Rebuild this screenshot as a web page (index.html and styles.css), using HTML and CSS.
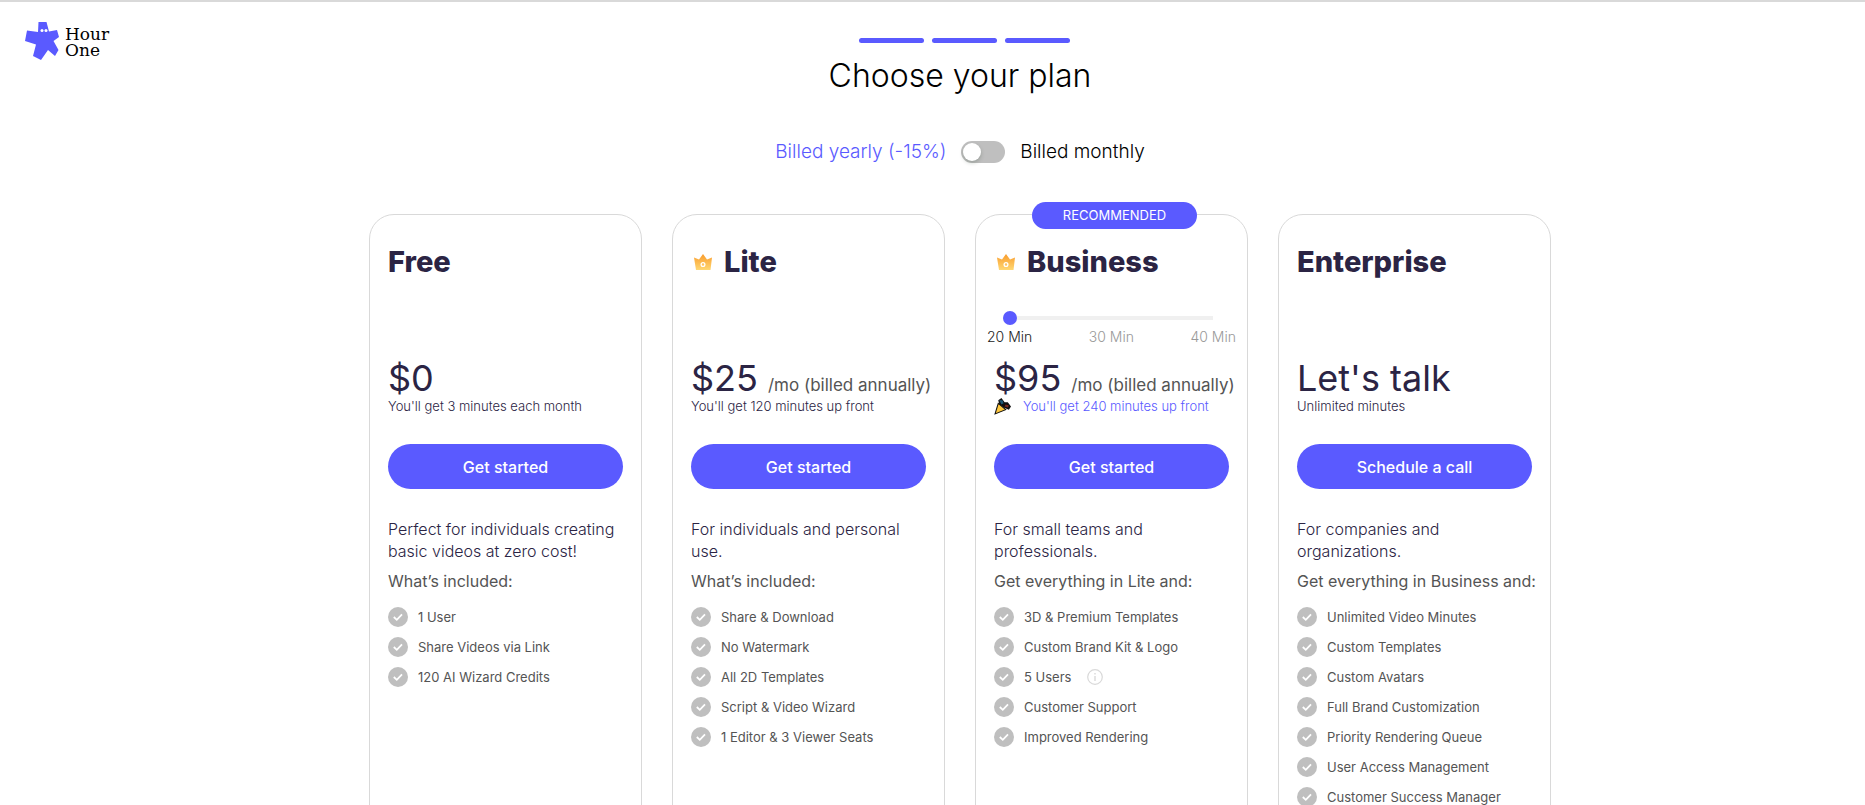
FILE: index.html
```html
<!DOCTYPE html>
<html lang="en">
<head>
    <meta charset="UTF-8">
    <meta name="viewport" content="width=device-width, initial-scale=1.0">
    <title>Choose your plan</title>
    <link rel="stylesheet" href="styles.css">
</head>
<body>
    <!-- Shared icons -->
    <svg class="sprite" aria-hidden="true">
        <defs>
            <linearGradient id="crown-fill" x1="0" y1="0" x2="0" y2="1">
                <stop offset="0" stop-color="#f99b2c"/>
                <stop offset="1" stop-color="#ffd873"/>
            </linearGradient>
        </defs>
        <symbol id="check" viewBox="0 0 20 20">
            <circle cx="10" cy="10" r="10" fill="#bfbfbf"/>
            <path d="M5.800 10 L8.800 12.800 L14 7.300" fill="none" stroke="#fff" stroke-width="1.8"/>
        </symbol>
        <symbol id="crown" viewBox="0 0 18 16">
            <path d="M0 3.5 L5 5.5 L9 0 L13 5.5 L18 3.5 L16.5 16 H2 Z" fill="url(#crown-fill)"/>
            <circle cx="9" cy="10.5" r="1.9" fill="#ffc35c" stroke="#fff" stroke-width="1.3"/>
        </symbol>
    </svg>

    <header class="header">
        <a class="logo" href="#">
            <svg class="logo-mark" viewBox="0 0 34 38" aria-hidden="true">
                <path d="M13.500 0 H21.500 L24 9.500 L32 8 L34 15 L28.500 19 L33.500 28 L30 34 L23 28 L16 38 L8 34 L11 22.500 L0 19 L2 8.500 L13 10 Z" fill="#5a5aff"/>
                <circle cx="17" cy="8.500" r="1.500" fill="#fff"/>
                <circle cx="21" cy="8.500" r="1.500" fill="#fff"/>
            </svg>
            <span class="logo-text">Hour<br>One</span>
        </a>
    </header>

    <main class="page">
        <div class="steps">
            <span class="step"></span>
            <span class="step"></span>
            <span class="step"></span>
        </div>
        <h1>Choose your plan</h1>

        <div class="billing">
            <span class="billing-yearly">Billed yearly (-15%)</span>
            <input type="checkbox" class="switch" id="billing-switch">
            <label for="billing-switch">Billed monthly</label>
        </div>

        <div class="plans">
            <section class="plan">
                <h2>Free</h2>
                <div class="minutes"></div>
                <div class="price">$0</div>
                <p class="price-note">You'll get 3 minutes each month</p>
                <button type="button">Get started</button>
                <p class="description">Perfect for individuals creating basic videos at zero cost!</p>
                <h3>What’s included:</h3>
                <ul>
                    <li><svg class="check"><use href="#check"/></svg>1 User</li>
                    <li><svg class="check"><use href="#check"/></svg>Share Videos via Link</li>
                    <li><svg class="check"><use href="#check"/></svg>120 AI Wizard Credits</li>
                </ul>
            </section>

            <section class="plan">
                <h2><svg class="crown"><use href="#crown"/></svg>Lite</h2>
                <div class="minutes"></div>
                <div class="price">$25 <span class="period">/mo (billed annually)</span></div>
                <p class="price-note">You'll get 120 minutes up front</p>
                <button type="button">Get started</button>
                <p class="description">For individuals and personal use.</p>
                <h3>What’s included:</h3>
                <ul>
                    <li><svg class="check"><use href="#check"/></svg>Share &amp; Download</li>
                    <li><svg class="check"><use href="#check"/></svg>No Watermark</li>
                    <li><svg class="check"><use href="#check"/></svg>All 2D Templates</li>
                    <li><svg class="check"><use href="#check"/></svg>Script &amp; Video Wizard</li>
                    <li><svg class="check"><use href="#check"/></svg>1 Editor &amp; 3 Viewer Seats</li>
                </ul>
            </section>

            <section class="plan">
                <div class="badge">RECOMMENDED</div>
                <h2><svg class="crown"><use href="#crown"/></svg>Business</h2>
                <div class="minutes">
                    <input type="range" class="slider" min="20" max="40" step="10" value="20" aria-label="Minutes per month">
                    <div class="slider-labels">
                        <span class="selected">20 Min</span>
                        <span>30 Min</span>
                        <span>40 Min</span>
                    </div>
                </div>
                <div class="price">$95 <span class="period">/mo (billed annually)</span></div>
                <p class="price-note highlight">
                    <svg class="party" viewBox="0 0 16 16" aria-hidden="true">
                        <path d="M4 2 L7 0 L10 4 L13 4 L16 8 L14 11 L9 9 L5 6 Z" fill="#111"/>
                        <path d="M5 2 L8 2 L9 5 L7 6 Z" fill="#1d5a78"/>
                        <path d="M11 6 L14 7 L13 9 L10 8 Z" fill="#7a2b20"/>
                        <path d="M4 5 L11 11 L1 15 Z" fill="#ffc83d" stroke="#111"/>
                    </svg>
                    You'll get 240 minutes up front
                </p>
                <button type="button">Get started</button>
                <p class="description">For small teams and professionals.</p>
                <h3>Get everything in Lite and:</h3>
                <ul>
                    <li><svg class="check"><use href="#check"/></svg>3D &amp; Premium Templates</li>
                    <li><svg class="check"><use href="#check"/></svg>Custom Brand Kit &amp; Logo</li>
                    <li>
                        <svg class="check"><use href="#check"/></svg>5 Users
                        <svg class="info" viewBox="0 0 16 16" aria-hidden="true">
                            <circle cx="8" cy="8" r="7.3" fill="none" stroke="#d9d9d9" stroke-width="1.2"/>
                            <path d="M8 7 V12 M8 4 V5.500" stroke="#d9d9d9" stroke-width="1.4"/>
                        </svg>
                    </li>
                    <li><svg class="check"><use href="#check"/></svg>Customer Support</li>
                    <li><svg class="check"><use href="#check"/></svg>Improved Rendering</li>
                </ul>
            </section>

            <section class="plan">
                <h2>Enterprise</h2>
                <div class="minutes"></div>
                <div class="price">Let's talk</div>
                <p class="price-note">Unlimited minutes</p>
                <button type="button">Schedule a call</button>
                <p class="description">For companies and organizations.</p>
                <h3>Get everything in Business and:</h3>
                <ul>
                    <li><svg class="check"><use href="#check"/></svg>Unlimited Video Minutes</li>
                    <li><svg class="check"><use href="#check"/></svg>Custom Templates</li>
                    <li><svg class="check"><use href="#check"/></svg>Custom Avatars</li>
                    <li><svg class="check"><use href="#check"/></svg>Full Brand Customization</li>
                    <li><svg class="check"><use href="#check"/></svg>Priority Rendering Queue</li>
                    <li><svg class="check"><use href="#check"/></svg>User Access Management</li>
                    <li><svg class="check"><use href="#check"/></svg>Customer Success Manager</li>
                </ul>
            </section>
        </div>
    </main>
</body>
</html>
```
FILE: styles.css
```css
* {
    box-sizing: border-box;
}

body {
    font-family: Inter, 'Open Sans', sans-serif;
    background-color: #fff;
    color: #000;
    margin: 0;
    border-top: 2px solid #d9d9d9;
    display: flex;
    align-items: flex-start;
}

h1, h2, h3, p, ul {
    margin: 0;
    padding: 0;
}

.sprite {
    position: absolute;
    width: 0;
    height: 0;
}

/* Side column with the logo */
.header {
    flex: none;
    width: 55px;
    padding: 20px 0 0 25px;
}

.logo {
    display: flex;
    gap: 6px;
    width: 86px;
    color: #000;
    text-decoration: none;
}

.logo-mark {
    flex: none;
    width: 34px;
    height: 38px;
}

.logo-text {
    padding-top: 4px;
    font-family: 'DejaVu Serif', serif;
    font-size: 17px;
    line-height: 16px;
}

.page {
    flex: 1;
    display: flex;
    flex-direction: column;
    align-items: center;
    padding: 36px 0 40px;
}

.steps {
    display: flex;
}

.step {
    width: 65px;
    height: 5px;
    margin-left: 8px;
    border-radius: 3px;
    background-color: #5a5aff;
}

h1 {
    margin-top: 10px;
    font-size: 32px;
    font-weight: 300;
    line-height: 46px;
}

.billing {
    display: flex;
    align-items: center;
    gap: 15px;
    margin-top: 39px;
    font-size: 19px;
    font-weight: 300;
    line-height: 28px;
}

.billing-yearly {
    color: #5a5aff;
}

.switch {
    -webkit-appearance: none;
    appearance: none;
    width: 44px;
    height: 22px;
    margin: 0;
    padding: 2px;
    border-radius: 11px;
    background-color: #bfbfbf;
    cursor: pointer;
}

.switch::before {
    content: "";
    display: block;
    width: 18px;
    height: 18px;
    border-radius: 50%;
    background-color: #fff;
    box-shadow: 0 2px 4px rgba(0, 35, 11, 0.2);
}

.switch:checked::before {
    margin-left: 22px;
}

/* Plan cards */
.plans {
    display: grid;
    grid-template-columns: repeat(4, 273px);
    gap: 30px;
    margin-top: 48px;
}

.plan {
    position: relative;
    min-height: 640px;
    padding: 26px 18px;
    border: 1px solid #d9d9d9;
    border-radius: 25px;
    color: #545454;
}

.badge {
    position: absolute;
    top: -13px;
    left: 56px;
    width: 165px;
    border-radius: 14px;
    background-color: #5a5aff;
    color: #fff;
    font-size: 13px;
    line-height: 27px;
    text-align: center;
}

h2 {
    display: flex;
    align-items: center;
    gap: 12px;
    color: #2b2444;
    font-size: 29px;
    font-weight: 800;
    line-height: 42px;
}

.crown {
    width: 18px;
    height: 16px;
    margin-left: 3px;
}

.minutes {
    height: 75px;
    padding-top: 28px;
}

.slider {
    -webkit-appearance: none;
    appearance: none;
    display: block;
    width: 210px;
    height: 14px;
    margin: 0 0 0 9px;
    background: linear-gradient(#f0f0f0, #f0f0f0) center / 100% 4px no-repeat;
    cursor: pointer;
}

.slider::-webkit-slider-thumb {
    -webkit-appearance: none;
    width: 14px;
    height: 14px;
    border-radius: 50%;
    background-color: #5a5aff;
}

.slider-labels {
    display: flex;
    justify-content: space-between;
    margin: 0 -7px;
    color: #999;
    font-size: 14px;
    font-weight: 300;
    line-height: 24px;
}

.slider-labels .selected {
    color: #222;
}

.price {
    display: flex;
    align-items: baseline;
    gap: 10px;
    height: 40px;
    color: #2b2444;
    font-size: 36px;
    line-height: 40px;
    white-space: nowrap;
}

.period {
    color: #545454;
    font-size: 17px;
}

.price-note {
    display: flex;
    align-items: center;
    gap: 12px;
    height: 16px;
    color: #2b2444;
    font-size: 13px;
    font-weight: 300;
    line-height: 16px;
}

.price-note.highlight {
    color: #5a5aff;
}

.party {
    width: 17px;
    height: 17px;
}

button {
    display: block;
    width: 100%;
    height: 45px;
    margin: 30px 0 29px;
    border: none;
    border-radius: 23px;
    background-color: #5a5aff;
    color: #fff;
    font-family: inherit;
    font-size: 16px;
    font-weight: 500;
    cursor: pointer;
}

.description {
    color: #2b2444;
    font-size: 16px;
    font-weight: 300;
    line-height: 22px;
}

h3 {
    margin: 8px 0 15px;
    font-size: 16px;
    font-weight: 400;
    line-height: 22px;
    white-space: nowrap;
}

ul {
    display: flex;
    flex-direction: column;
    gap: 10px;
    list-style: none;
}

li {
    display: flex;
    align-items: center;
    font-size: 13px;
    line-height: 20px;
}

.check {
    width: 20px;
    height: 20px;
    margin-right: 10px;
}

.info {
    width: 16px;
    height: 16px;
    margin-left: 16px;
}
```
